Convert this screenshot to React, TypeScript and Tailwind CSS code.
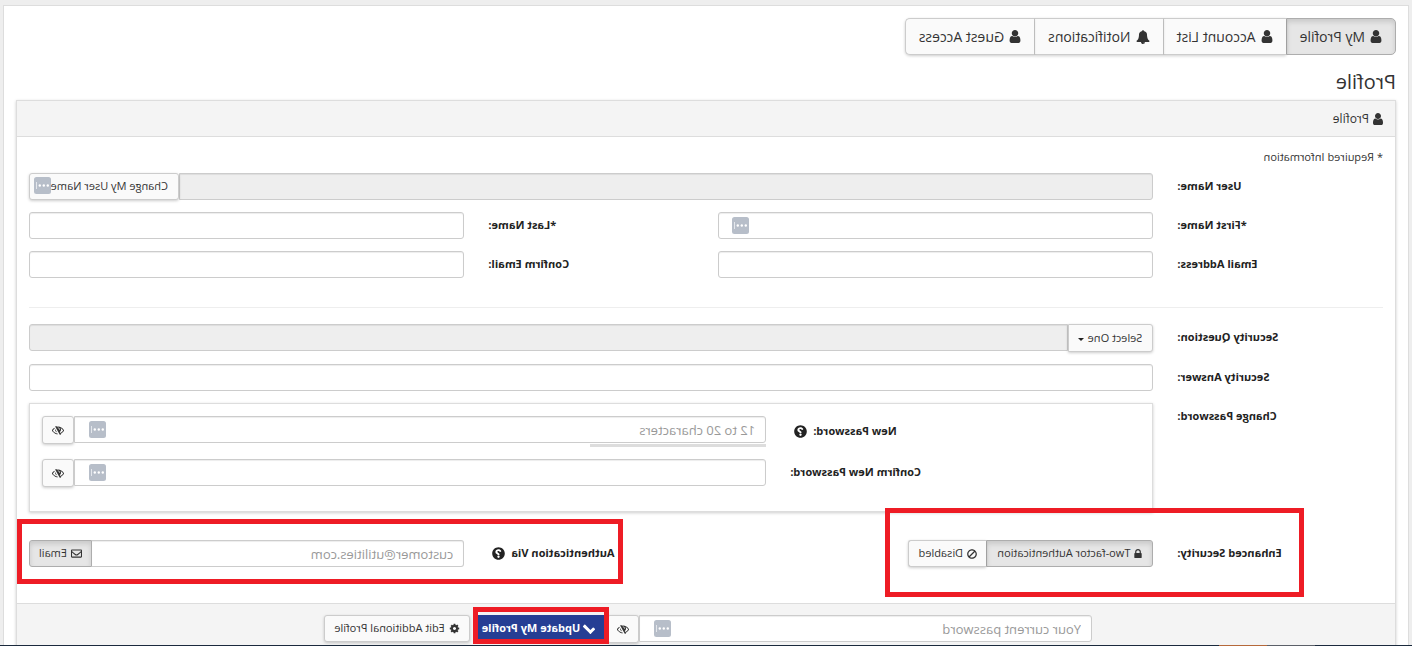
import type { ReactNode } from 'react';
import { FaBan, FaQuestionCircle, FaRegEnvelope } from 'react-icons/fa';

const USER =
  'M1536 1399q0 109-62.5 187t-150.5 78h-854q-88 0-150.5-78t-62.5-187q0-85 8.5-160.5t31.5-152 58.5-131 94-89 134.5-34.5q131 128 313 128t313-128q76 0 134.5 34.5t94 89 58.5 131 31.5 152 8.5 160.5zm-256-887q0 159-112.5 271.5t-271.5 112.5-271.5-112.5-112.5-271.5 112.5-271.5 271.5-112.5 271.5 112.5 112.5 271.5z';
const BELL =
  'M912 1696q0-16-16-16-59 0-101.5-42.5t-42.5-101.5q0-16-16-16t-16 16q0 73 51.5 124.5t124.5 51.5q16 0 16-16zm816-288q0 52-38 90t-90 38h-448q0 106-75 181t-181 75-181-75-75-181h-448q-52 0-90-38t-38-90q50-42 91-88t85-119.5 74.5-158.5 50-206 19.5-260q0-152 117-282.5t307-158.5q-8-19-8-39 0-40 28-68t68-28 68 28 28 68q0 20-8 39 190 28 307 158.5t117 282.5q0 139 19.5 260t50 206 74.5 158.5 85 119.5 91 88z';
const LOCK =
  'M640 768h512v-192q0-106-75-181t-181-75-181 75-75 181v192zm832 96v576q0 40-28 68t-68 28h-960q-40 0-68-28t-28-68v-576q0-40 28-68t68-28h32v-192q0-184 132-316t316-132 316 132 132 316v192h32q40 0 68 28t28 68z';
const CHECK =
  'M1671 566q0 40-28 68l-724 724-136 136q-28 28-68 28t-68-28l-136-136-362-362q-28-28-28-68t28-68l136-136q28-28 68-28t68 28l294 295 656-657q28-28 68-28t68 28l136 136q28 28 28 68z';
const COG =
  'M1152 896q0-106-75-181t-181-75-181 75-75 181 75 181 181 75 181-75 75-181zm512-109v222q0 12-8 23t-20 13l-185 28q-19 54-39 91 35 50 107 138 10 12 10 25t-9 23q-27 37-99 108t-94 71q-12 0-26-9l-138-108q-44 23-91 38-16 136-29 186-7 28-36 28h-222q-14 0-24.5-8.5t-11.5-21.5l-28-184q-49-16-90-37l-141 107q-10 9-25 9-14 0-25-11-126-114-165-168-7-10-7-23 0-12 8-23 15-21 51-66.5t54-70.5q-27-50-41-99l-183-27q-13-2-21-12.5t-8-23.5v-222q0-12 8-23t19-13l186-28q14-46 39-92-40-57-107-138-10-12-10-24 0-10 9-23 26-36 98.5-107.5t94.5-71.5q13 0 26 10l138 107q44-23 91-38 16-136 29-186 7-28 36-28h222q14 0 24.5 8.5t11.5 21.5l28 184q49 16 90 37l142-107q9-9 24-9 13 0 25 10 129 119 165 170 7 8 7 22 0 12-8 23-15 21-51 66.5t-54 70.5q26 50 41 98l183 28q13 2 21 12.5t8 23.5z';
const EYE =
  'M555 1335l78-141q-87-63-136-159t-49-203q0-121 61-225-229 117-381 353 167 258 427 375zm389-759q0-20-14-34t-34-14q-125 0-214.5 89.5t-89.5 214.5q0 20 14 34t34 14 34-14 14-34q0-86 61-147t147-61q20 0 34-14t14-34zm363-191q0 7-1 9-106 189-316 567t-315 566l-49 89q-10 16-28 16-12 0-134-70-16-10-16-28 0-12 44-87-143-65-263.5-173t-208.5-245q-20-31-20-69t20-69q153-235 380-371t496-136q89 0 180 17l54-97q10-16 28-16 5 0 18 6t31 15.5 33 18.5 31.5 18.5 19.5 11.5q16 10 16 27zm37 447q0 139-79 253.5t-209 164.5l280-502q8 45 8 84zm448 128q0 35-20 69-39 64-109 145-150 172-347.5 267t-419.5 95l74-132q212-18 392.5-137t301.5-307q-115-179-282-294l63-112q95 64 182.5 153t144.5 182q20 34 20 69z';

function Glyph({ d, box = '0 0 1792 1792', className }: { d: string; box?: string; className: string }) {
  return (
    <svg viewBox={box} fill="currentColor" aria-hidden="true" className={`shrink-0 ${className}`}>
      <path d={d} />
    </svg>
  );
}

const UserIcon = ({ className }: { className: string }) => <Glyph d={USER} box="256 128 1280 1536" className={className} />;

function ManagerBadge({ className }: { className: string }) {
  return (
    <svg viewBox="0 0 17 17" aria-hidden="true" className={`absolute size-[17px] ${className}`}>
      <rect width="17" height="17" rx="2.5" fill="#b7bec9" />
      <circle cx="3.2" cy="8.5" r="1.2" fill="#fff" />
      <circle cx="7.2" cy="8.5" r="1.2" fill="#fff" />
      <circle cx="11.2" cy="8.5" r="1.2" fill="#fff" />
      <rect x="14" y="5" width="1" height="7" fill="#e4e7ec" />
    </svg>
  );
}

const field =
  'block h-[27px] w-full min-w-0 border border-[#ccc] bg-white px-2.5 text-[13px] text-[#444] shadow-[inset_0_1px_1px_rgba(0,0,0,0.075)] placeholder:text-[#999] outline-none';
const button =
  'flex items-center justify-center whitespace-nowrap border border-[#ccc] bg-[#fafafa] text-[11px] text-[#333] shadow-[0_1px_3px_rgba(0,0,0,0.2)]';
const pressed =
  'flex items-center justify-center whitespace-nowrap border border-[#adadad] bg-[#e6e6e6] text-[11px] text-[#333] shadow-[inset_0_3px_5px_rgba(0,0,0,0.125)]';

function Label({ id, span, children }: { id: string; span: string; children: ReactNode }) {
  return (
    <label htmlFor={id} className={`${span} px-3 pt-1 text-right text-[11px] leading-[18px] font-bold text-[#222]`}>
      {children}
    </label>
  );
}

function Highlight({ className }: { className: string }) {
  return <span aria-hidden="true" className={`pointer-events-none absolute z-10 border-[5px] border-[#ee1c25] ${className}`} />;
}

function PasswordField({ id, placeholder }: { id: string; placeholder?: string }) {
  return (
    <div className="flex">
      <div className="relative flex-1">
        <input id={id} type="password" placeholder={placeholder} className={`${field} rounded-l-[3px]`} />
        <ManagerBadge className="top-[5px] right-[15px]" />
      </div>
      <button type="button" aria-label="Show password" className={`${button} h-7 w-8 rounded-[3px]`}>
        <Glyph d={EYE} className="size-3" />
      </button>
    </div>
  );
}

const tabs = [
  { label: 'My Profile', icon: 'user' },
  { label: 'Account List', icon: 'user' },
  { label: 'Notifications', icon: 'bell' },
  { label: 'Guest Access', icon: 'user' },
];

export default function App() {
  return (
    <div className="flex h-screen -scale-x-100 flex-col overflow-hidden bg-[#eee] font-['Open_Sans',sans-serif] text-xs text-[#333]">
      <main className="mx-[3px] mt-[5px] min-h-0 flex-1 overflow-hidden border border-b-0 border-[#ddd] bg-white px-3 pt-3">
        <nav className="flex">
          {tabs.map((t, i) => (
            <button
              key={t.label}
              type="button"
              className={`${i === 0 ? pressed : button} h-[37px] ${i > 0 ? 'border-l-0' : ''} first:rounded-l-[5px] last:rounded-r-[5px]`}
            >
              <span className="flex items-center gap-[5px] px-[13px] text-sm">
                {t.icon === 'bell' ? <Glyph d={BELL} className="size-3.5" /> : <UserIcon className="h-[13px] w-3" />}
                {t.label}
              </span>
            </button>
          ))}
        </nav>
        <h1 className="mt-[13px] text-xl leading-7">Profile</h1>

        <section className="mt-1 border border-[#ddd] shadow-[0_1px_3px_rgba(0,0,0,0.2)]">
          <header className="flex h-9 items-center gap-1 border-b border-[#ddd] bg-[#f4f4f4] px-3 text-xs">
            <UserIcon className="h-3 w-2.5" />
            Profile
          </header>

          <div className="px-3 pt-[11px]">
            <p className="mb-[7px] text-[11px] leading-[18px]">* Required Information</p>

            <div className="-mx-3 grid grid-cols-12 gap-y-3">
              <Label id="user" span="col-span-2">User Name:</Label>
              <div className="relative col-span-10 flex px-3">
                <input id="user" disabled className={`${field} flex-1 rounded-l-[3px] !bg-[#eee]`} />
                <button type="button" className={`${button} h-[27px] w-[150px] shrink-0 !justify-start rounded-[3px] pl-2.5`}>
                  Change My User Name
                </button>
                <ManagerBadge className="top-1 right-[17px]" />
              </div>

              <Label id="first" span="col-span-2">*First Name:</Label>
              <div className="relative col-span-4 px-3">
                <input id="first" className={`${field} rounded-[3px]`} />
                <ManagerBadge className="top-[5px] right-[26px]" />
              </div>
              <Label id="last" span="col-span-2">*Last Name:</Label>
              <div className="col-span-4 px-3">
                <input id="last" className={`${field} rounded-[3px]`} />
              </div>

              <Label id="email" span="col-span-2">Email Address:</Label>
              <div className="col-span-4 px-3">
                <input id="email" type="email" className={`${field} rounded-[3px]`} />
              </div>
              <Label id="confirm-email" span="col-span-2">Confirm Email:</Label>
              <div className="col-span-4 px-3">
                <input id="confirm-email" type="email" className={`${field} rounded-[3px]`} />
              </div>
            </div>

            <hr className="mt-[29px] mb-4 border-[#eee]" />

            <div className="-mx-3 grid grid-cols-12 gap-y-3">
              <Label id="question" span="col-span-2">Security Question:</Label>
              <div className="col-span-10 flex px-3">
                <div className="relative shrink-0">
                  <select id="question" className={`${button} h-7 w-[85px] appearance-none rounded-l-[3px] pl-2.5`}>
                    <option>Select One</option>
                  </select>
                  <span
                    aria-hidden="true"
                    className="pointer-events-none absolute top-[14px] right-2.5 border-x-[3px] border-t-[3px] border-x-transparent border-t-[#222]"
                  />
                </div>
                <input aria-label="Selected question" disabled className={`${field} h-7 flex-1 rounded-r-[3px] !bg-[#eee]`} />
              </div>

              <Label id="answer" span="col-span-2">Security Answer:</Label>
              <div className="col-span-10 px-3">
                <input id="answer" className={`${field} rounded-[3px]`} />
              </div>

              <Label id="new-password" span="col-span-2">Change Password:</Label>
              <div className="col-span-10 px-3">
                <div className="border border-[#ddd] px-3 py-3 shadow-[0_1px_3px_rgba(0,0,0,0.2)]">
                  <div className="-mx-3 mb-[13px] grid grid-cols-12 gap-y-3">
                    <Label id="new-password" span="col-span-4">
                      <span className="flex items-center justify-end gap-1.5 pt-0.5 pr-1">
                        New Password:
                        <FaQuestionCircle className="size-[13px]" />
                      </span>
                    </Label>
                    <div className="col-span-8 px-3">
                      <div className="h-7">
                        <PasswordField id="new-password" placeholder="12 to 20 characters" />
                      </div>
                      <div className="h-[3px] w-[176px] bg-[#ddd]" />
                    </div>
                    <Label id="confirm-password" span="col-span-4">Confirm New Password:</Label>
                    <div className="col-span-8 h-[27px] px-3">
                      <PasswordField id="confirm-password" />
                    </div>
                  </div>
                </div>
              </div>
            </div>

            <div className="relative -mx-3 mt-7 mb-9 grid grid-cols-12">
              <Label id="two-factor" span="col-span-2">Enhanced Security:</Label>
              <div className="col-span-4 flex px-3">
                <button id="two-factor" type="button" aria-pressed="true" className={`${pressed} h-[27px] w-[167px] gap-1 rounded-l-[3px]`}>
                  <Glyph d={LOCK} box="320 128 1152 1408" className="h-[9px] w-2" />
                  Two-factor Authentication
                </button>
                <button type="button" aria-pressed="false" className={`${button} h-[27px] w-[78px] gap-1 rounded-r-[3px] border-l-0`}>
                  <FaBan className="size-[10px]" />
                  Disabled
                </button>
              </div>
              <Label id="auth-email" span="col-span-2">
                <span className="flex items-center justify-end gap-1.5 pr-1">
                  Authentication Via
                  <FaQuestionCircle className="size-[13px]" />
                </span>
              </Label>
              <div className="col-span-4 flex px-3">
                <input id="auth-email" type="email" placeholder="customer@utilities.com" className={`${field} flex-1 rounded-l-[3px] border-r-0`} />
                <button type="button" aria-pressed="true" className={`${pressed} h-[27px] w-[63px] shrink-0 gap-1 rounded-r-[3px]`}>
                  <FaRegEnvelope className="size-[11px]" />
                  Email
                </button>
              </div>
              <Highlight className="-top-8 left-[91px] h-[89px] w-[419px]" />
              <Highlight className="-top-[21px] right-0 h-[65px] w-[606px]" />
            </div>
          </div>

          <footer className="flex justify-center border-t border-[#ddd] bg-[#f4f4f4] py-[11px] pr-4 pl-3">
            <div className="w-[485px]">
              <PasswordField id="current-password" placeholder="Your current password" />
            </div>
            <div className="relative ml-0.5">
              <button type="button" className="flex h-[27px] w-[128px] items-center justify-center gap-0.5 whitespace-nowrap bg-[#263e94] pl-1 text-[11px] font-bold text-white">
                <Glyph d={CHECK} className="size-3.5" />
                Update My Profile
              </button>
              <Highlight className="-inset-x-1 -top-2 h-[37px]" />
            </div>
            <button type="button" className={`${button} ml-[7px] h-[27px] w-[146px] gap-1 rounded-[3px]`}>
              <Glyph d={COG} className="size-[11px]" />
              Edit Additional Profile
            </button>
          </footer>
        </section>
      </main>
      <div className="flex h-px shrink-0 bg-[#1b2a3d] pl-[97px]">
        <span className="w-12 bg-[#5b6068]" />
        <span className="w-12 bg-[#b5683a]" />
      </div>
    </div>
  );
}
